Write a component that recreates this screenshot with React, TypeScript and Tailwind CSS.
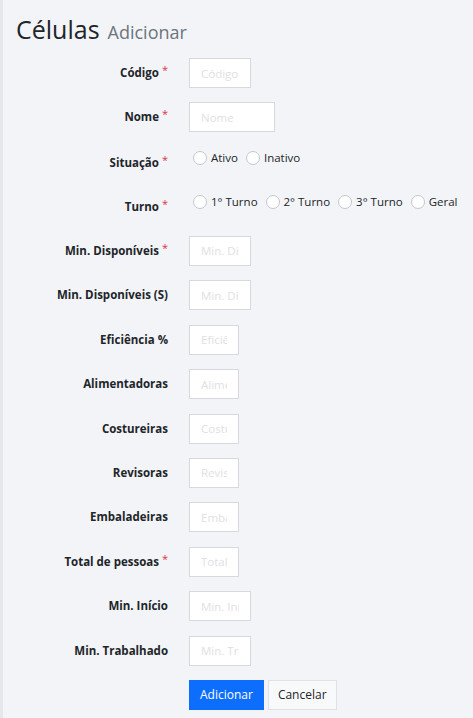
import React from "react";

type Field = { label: string; req?: boolean; ph: string; w: string };

const fields1: Field[] = [
  { label: "Código", req: true, ph: "Código", w: "w-[62px]" },
  { label: "Nome", req: true, ph: "Nome", w: "w-[86px]" },
];

const fields2: Field[] = [
  { label: "Min. Disponíveis", req: true, ph: "Min. Disponíveis", w: "w-[62px]" },
  { label: "Min. Disponíveis (S)", ph: "Min. Disponíveis", w: "w-[62px]" },
  { label: "Eficiência %", ph: "Eficiência", w: "w-[50px]" },
  { label: "Alimentadoras", ph: "Alimentadoras", w: "w-[50px]" },
  { label: "Costureiras", ph: "Costureiras", w: "w-[50px]" },
  { label: "Revisoras", ph: "Revisoras", w: "w-[50px]" },
  { label: "Embaladeiras", ph: "Embaladeiras", w: "w-[50px]" },
  { label: "Total de pessoas", req: true, ph: "Total", w: "w-[50px]" },
  { label: "Min. Início", ph: "Min. Início", w: "w-[62px]" },
  { label: "Min. Trabalhado", ph: "Min. Trabalhado", w: "w-[62px]" },
];

function Label({ text, req, pt }: { text: string; req?: boolean; pt?: string }) {
  return (
    <div className={`w-[152px] shrink-0 text-right text-[11.5px] font-bold text-[#212529] leading-[16px] ${pt ?? ""}`}>
      {text}
      {req ? <span className="text-[#dc3545] font-normal text-[11px] ml-[3px] relative top-[-3px]">*</span> : null}
    </div>
  );
}

function InputRow({ f }: { f: Field }) {
  return (
    <div className="flex items-center gap-[21px] h-[30px]">
      <Label text={f.label} req={f.req} />
      <input
        placeholder={f.ph}
        className={`${f.w} h-[30px] border border-[#d6d9de] bg-white px-[11px] text-[11.5px] text-[#212529] placeholder:text-[#dfe0e3] outline-none`}
      />
    </div>
  );
}

function Radio({ label }: { label: string }) {
  return (
    <label className="flex items-center gap-[4px] text-[11.5px] text-[#212529] leading-[16px]">
      <span className="w-[14px] h-[14px] rounded-full border border-[#c3c7cc] bg-white shrink-0" />
      {label}
    </label>
  );
}

function RadioRow({ label, options }: { label: string; options: string[] }) {
  return (
    <div className="flex items-start gap-[21px] h-[30px]">
      <Label text={label} req pt="pt-[8px]" />
      <div className="flex items-center gap-[8px] pl-[4px] pt-[3px]">
        {options.map((o) => (
          <Radio key={o} label={o} />
        ))}
      </div>
    </div>
  );
}

export default function App() {
  return (
    <div
      className="min-h-[718px] w-full bg-[#f3f4f8] flex"
      style={{ fontFamily: '"Open Sans", "Noto Sans", sans-serif' }}
    >
      <div className="w-[3px] shrink-0 bg-[#e6e7eb]" />
      <div className="pl-[13px] pt-[12px]">
        <h1 className="flex items-baseline gap-[8px] text-[#212529]">
          <span className="text-[25px] leading-[34px]">Células</span>
          <span className="text-[18px] text-[#6c757d]">Adicionar</span>
        </h1>
        <div className="mt-[12px] flex flex-col gap-[14.45px]">
          {fields1.map((f) => (
            <InputRow key={f.label} f={f} />
          ))}
          <RadioRow label="Situação" options={["Ativo", "Inativo"]} />
          <RadioRow label="Turno" options={["1° Turno", "2° Turno", "3° Turno", "Geral"]} />
          {fields2.map((f) => (
            <InputRow key={f.label} f={f} />
          ))}
          <div className="flex gap-[21px]">
            <div className="w-[152px] shrink-0" />
            <div className="flex gap-[4px]">
              <button className="h-[30px] px-[11px] bg-[#0d6efd] text-white text-[12px]">Adicionar</button>
              <button className="h-[30px] px-[9px] bg-[#f8f9fa] border border-[#dee2e6] text-[#212529] text-[12px]">Cancelar</button>
            </div>
          </div>
        </div>
      </div>
    </div>
  );
}
